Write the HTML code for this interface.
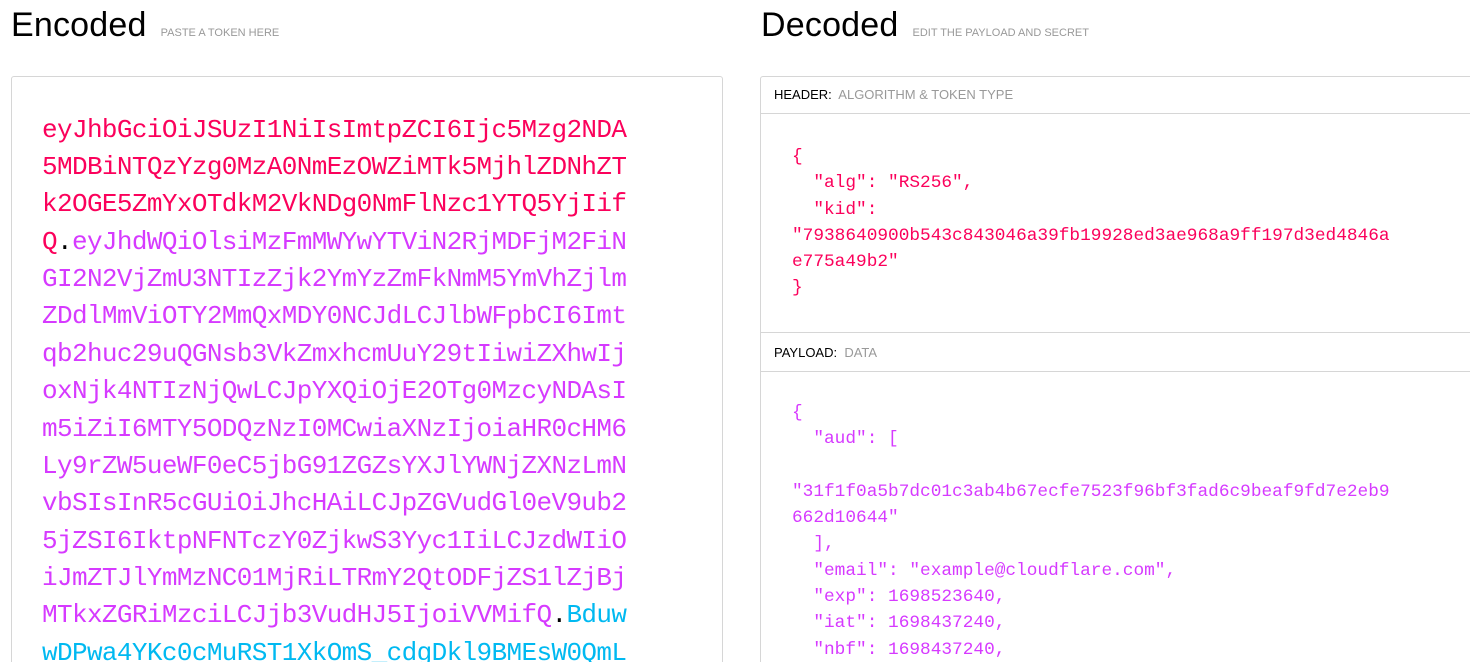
<!DOCTYPE html>
<html style="overflow:hidden;height:662px"><head><meta charset="utf-8"><style>
body{margin:0;width:1470px;height:662px;overflow:hidden;background:#fff;font-family:"Liberation Sans",sans-serif;position:relative}
.t{position:absolute;top:6px;font-size:34px;color:#000;letter-spacing:0.2px}
.t span{font-size:11px;color:#999;margin-left:14px;letter-spacing:0}
.box{position:absolute;left:11px;top:76px;width:710px;height:600px;border:1px solid #d6d6d6;border-radius:3px}
svg.enc{position:absolute;left:0;top:0}
svg text{font-family:"Liberation Mono",monospace;font-size:26px}
.rb{position:absolute;left:760px;top:76px;width:720px;height:600px;border:1px solid #d6d6d6;border-radius:3px}
.bar{position:absolute;left:760px;width:720px;border-top:1px solid #d6d6d6;border-bottom:1px solid #d6d6d6;font-size:13px;color:#000;padding-left:14px;box-sizing:border-box}
.bar span{color:#999}
.js{position:absolute;left:792px;font-family:"Liberation Mono",monospace;font-size:17.8px;line-height:26.3px;white-space:pre}
.r{color:#fb015b}.p{color:#d63aff}
</style></head><body>
<div class="t" style="left:11px">Encoded<span>PASTE A TOKEN HERE</span></div>
<div class="t" style="left:761px">Decoded<span>EDIT THE PAYLOAD AND SECRET</span></div>
<div class="box"></div>
<svg class="enc" width="740" height="662">
<g>
<text x="42" y="137" textLength="585" lengthAdjust="spacing" fill="#fb015b">eyJhbGciOiJSUzI1NiIsImtpZCI6Ijc5Mzg2NDA</text>
<text x="42" y="174" textLength="585" lengthAdjust="spacing" fill="#fb015b">5MDBiNTQzYzg0MzA0NmEzOWZiMTk5MjhlZDNhZT</text>
<text x="42" y="211" textLength="585" lengthAdjust="spacing" fill="#fb015b">k2OGE5ZmYxOTdkM2VkNDg0NmFlNzc1YTQ5YjIif</text>
<text x="42" y="249" textLength="585" lengthAdjust="spacing" fill="#d63aff"><tspan fill="#fb015b">Q</tspan><tspan fill="#000">.</tspan>eyJhdWQiOlsiMzFmMWYwYTViN2RjMDFjM2FiN</text>
<text x="42" y="286" textLength="585" lengthAdjust="spacing" fill="#d63aff">GI2N2VjZmU3NTIzZjk2YmYzZmFkNmM5YmVhZjlm</text>
<text x="42" y="323" textLength="585" lengthAdjust="spacing" fill="#d63aff">ZDdlMmViOTY2MmQxMDY0NCJdLCJlbWFpbCI6Imt</text>
<text x="42" y="361" textLength="585" lengthAdjust="spacing" fill="#d63aff">qb2huc29uQGNsb3VkZmxhcmUuY29tIiwiZXhwIj</text>
<text x="42" y="398" textLength="585" lengthAdjust="spacing" fill="#d63aff">oxNjk4NTIzNjQwLCJpYXQiOjE2OTg0MzcyNDAsI</text>
<text x="42" y="436" textLength="585" lengthAdjust="spacing" fill="#d63aff">m5iZiI6MTY5ODQzNzI0MCwiaXNzIjoiaHR0cHM6</text>
<text x="42" y="473" textLength="585" lengthAdjust="spacing" fill="#d63aff">Ly9rZW5ueWF0eC5jbG91ZGZsYXJlYWNjZXNzLmN</text>
<text x="42" y="510" textLength="585" lengthAdjust="spacing" fill="#d63aff">vbSIsInR5cGUiOiJhcHAiLCJpZGVudGl0eV9ub2</text>
<text x="42" y="548" textLength="585" lengthAdjust="spacing" fill="#d63aff">5jZSI6IktpNFNTczY0ZjkwS3Yyc1IiLCJzdWIiO</text>
<text x="42" y="585" textLength="585" lengthAdjust="spacing" fill="#d63aff">iJmZTJlYmMzNC01MjRiLTRmY2QtODFjZS1lZjBj</text>
<text x="42" y="622" textLength="585" lengthAdjust="spacing" fill="#d63aff">MTkxZGRiMzciLCJjb3VudHJ5IjoiVVMifQ<tspan fill="#000">.</tspan><tspan fill="#00b9f1">Bduw</tspan></text>
<text x="42" y="660" textLength="585" lengthAdjust="spacing" fill="#00b9f1">wDPwa4YKc0cMuRST1XkOmS_cdgDkl9BMEsW0QmL</text>
</g></svg>
<div class="rb"></div>
<div class="bar" style="top:76px;height:38px;line-height:37px;border-top:none">HEADER:&nbsp; <span>ALGORITHM &amp; TOKEN TYPE</span></div>
<div class="js r" style="top:144px">{
  "alg": "RS256",
  "kid":
"7938640900b543c843046a39fb19928ed3ae968a9ff197d3ed4846a
e775a49b2"
}</div>
<div class="bar" style="top:332px;height:40px;line-height:39px">PAYLOAD:&nbsp; <span>DATA</span></div>
<div class="js p" style="top:400px">{
  "aud": [

"31f1f0a5b7dc01c3ab4b67ecfe7523f96bf3fad6c9beaf9fd7e2eb9
662d10644"
  ],
  "email": "example@cloudflare.com",
  "exp": 1698523640,
  "iat": 1698437240,
  "nbf": 1698437240,</div>
</body></html>
